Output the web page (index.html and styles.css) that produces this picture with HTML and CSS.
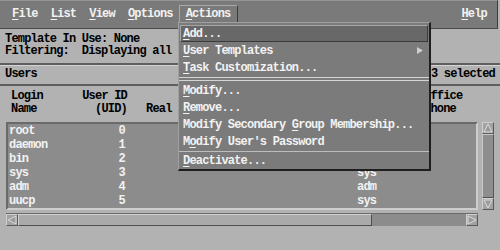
FILE: index.html
```html
<!DOCTYPE html>
<html lang="en">
<head>
    <meta charset="UTF-8">
    <title>Users</title>
    <link rel="stylesheet" href="styles.css">
</head>
<body>

<div class="window">
    <!-- ===== MENU BAR ===== -->
    <div class="menubar">
        <span class="menu-title"><u>F</u>ile</span>
        <span class="menu-title"><u>L</u>ist</span>
        <span class="menu-title"><u>V</u>iew</span>
        <span class="menu-title"><u>O</u>ptions</span>
        <span class="menu-title active"><u>A</u>ctions</span>
        <span class="menu-title help"><u>H</u>elp</span>
    </div>

    <!-- ===== INFO ===== -->
    <div class="info">
        <div class="line">Template In Use: None</div>
        <div class="line">Filtering:  Displaying all</div>
    </div>

    <div class="section-bar">
        <span>Users</span>
        <span>3 selected</span>
    </div>

    <!-- ===== COLUMN HEADERS ===== -->
    <div class="headers">
        <div class="col-login">Login<br>Name</div>
        <div class="col-uid">User ID<br>(UID)</div>
        <div class="col-real"><br>Real Name</div>
        <div class="col-group"><br>Group</div>
        <div class="col-office">Office<br>Phone</div>
    </div>

    <!-- ===== USER LIST ===== -->
    <div class="list-area">
        <div class="list-box">
            <div class="row"><span class="col-login">root</span><span class="col-uid">0</span><span class="col-real"></span><span class="col-group">other</span></div>
            <div class="row"><span class="col-login">daemon</span><span class="col-uid">1</span><span class="col-real"></span><span class="col-group">other</span></div>
            <div class="row"><span class="col-login">bin</span><span class="col-uid">2</span><span class="col-real"></span><span class="col-group">bin</span></div>
            <div class="row"><span class="col-login">sys</span><span class="col-uid">3</span><span class="col-real"></span><span class="col-group">sys</span></div>
            <div class="row"><span class="col-login">adm</span><span class="col-uid">4</span><span class="col-real"></span><span class="col-group">adm</span></div>
            <div class="row"><span class="col-login">uucp</span><span class="col-uid">5</span><span class="col-real"></span><span class="col-group">sys</span></div>
        </div>
        <div class="vscroll">
            <div class="arrow">
                <svg width="10" height="10" viewBox="0 0 10 10"><polygon points="5,1 9,9 1,9" class="tri"/></svg>
            </div>
            <div class="vthumb"></div>
            <div class="arrow">
                <svg width="10" height="10" viewBox="0 0 10 10"><polygon points="1,1 9,1 5,9" class="tri"/></svg>
            </div>
        </div>
    </div>

    <div class="hscroll">
        <div class="arrow">
            <svg width="10" height="10" viewBox="0 0 10 10"><polygon points="1,5 9,1 9,9" class="tri"/></svg>
        </div>
        <div class="hthumb"></div>
        <div class="trough"></div>
        <div class="arrow">
            <svg width="10" height="10" viewBox="0 0 10 10"><polygon points="1,1 9,5 1,9" class="tri"/></svg>
        </div>
    </div>

    <!-- ===== ACTIONS DROPDOWN ===== -->
    <div class="dropdown">
        <div class="item selected"><span><u>A</u>dd...</span></div>
        <div class="item"><span><u>U</u>ser Templates</span><svg class="cascade" width="6" height="7" viewBox="0 0 6 7"><polygon points="0,0 6,3.5 0,7"/></svg></div>
        <div class="item"><span><u>T</u>ask Customization...</span></div>
        <div class="sep-double"></div>
        <div class="item"><span><u>M</u>odify...</span></div>
        <div class="item"><span><u>R</u>emove...</span></div>
        <div class="item"><span>Modify Secondary <u>G</u>roup Membership...</span></div>
        <div class="item"><span>M<u>o</u>dify User's Password</span></div>
        <div class="sep"></div>
        <div class="item last"><span><u>D</u>eactivate...</span></div>
    </div>
</div>

</body>
</html>
```

FILE: styles.css
```css
:root {
    --bar: #7a7a7a;
    --body: #b2b2b2;
    --list: #8c8c8c;
    --menu: #7b7b7b;
    --hilite: #686868;
    --light: #d4d4d4;
    --dark: #3c3c3c;
    --text-light: #f2f2f2;
    --font: "Liberation Mono", "Courier New", monospace;
}
body {
    margin: 0;
    background-color: var(--body);
}
.window {
    position: relative;
    width: 500px;
    height: 250px;
    overflow: hidden;
    background-color: var(--body);
    font-family: var(--font);
    font-weight: bold;
    font-size: 12px;
    letter-spacing: -0.8px;
    color: #000;
    white-space: nowrap;
}
u {
    text-decoration: underline;
    text-underline-offset: 2px;
}

/* ----- menu bar ----- */
.menubar {
    display: flex;
    gap: 1px;
    height: 23px;
    margin-right: 2px;
    padding: 4px 4px 0 6px;
    background-color: var(--bar);
    border-top: 1px solid #959595;
    border-right: 1px solid var(--dark);
    border-bottom: 1px solid #4a4a4a;
    color: var(--text-light);
}
.menu-title {
    height: 18px;
    line-height: 18px;
    padding: 0 6px;
    box-sizing: border-box;
}
.menu-title.active {
    padding: 0 6px;
    margin-left: -1px;
    border-top: 1px solid #a8a8a8;
    border-left: 1px solid #a8a8a8;
    border-right: 1px solid var(--dark);
    line-height: 17px;
}
.menu-title.help {
    margin-left: auto;
}

/* ----- info ----- */
.info {
    padding: 4px 5px 6px;
    line-height: 12px;
}
.info .line {
    white-space: pre;
}
.section-bar {
    display: flex;
    justify-content: space-between;
    height: 19px;
    line-height: 19px;
    padding: 0 5px 0 5px;
    border-top: 2px solid #5e5e5e;
    border-bottom: 2px solid #5e5e5e;
    box-shadow: inset 0 1px 0 var(--light);
}

/* ----- columns ----- */
.col-login { width: 70px; }
.col-uid { width: 46px; text-align: right; }
.col-real { width: 230px; padding-left: 20px; }
.col-group { width: 69px; }
.headers {
    display: flex;
    padding: 4px 0 0 11px;
    margin-bottom: 6px;
    line-height: 13px;
}
.headers .col-uid { width: 46px; }
.headers .col-real { width: 209px; padding-left: 19px; }

/* ----- list ----- */
.list-area {
    display: flex;
    gap: 4px;
    height: 88px;
    padding: 0 6px;
}
.list-box {
    flex: 1;
    background-color: var(--list);
    border: 2px solid;
    border-color: #6a6a6a #cdcdcd #cdcdcd #6a6a6a;
    color: var(--text-light);
}
.row {
    display: flex;
    height: 14px;
    line-height: 14px;
    padding-left: 1px;
}
.row .col-real { width: 212px; }
.vscroll {
    display: flex;
    flex-direction: column;
    width: 12px;
    background-color: var(--list);
}
.arrow {
    display: flex;
    align-items: center;
    justify-content: center;
    width: 12px;
    height: 12px;
    background-color: #a2a2a2;
    border: 1px solid;
    border-color: #cfcfcf #5a5a5a #5a5a5a #cfcfcf;
    box-sizing: border-box;
}
.tri {
    fill: #9a9a9a;
    stroke: #dcdcdc;
    stroke-width: 1;
}
.vthumb {
    flex: 1;
    background-color: #8e8e8e;
    border: 1px solid;
    border-color: #c8c8c8 #555 #555 #c8c8c8;
}
.hscroll {
    display: flex;
    width: 472px;
    height: 13px;
    margin: 3px 0 0 6px;
    background-color: var(--list);
    border-top: 1px solid #6a6a6a;
    box-sizing: border-box;
}
.hscroll .arrow { height: 12px; }
.hthumb {
    width: 354px;
    background-color: #aaaaaa;
    border: 1px solid;
    border-color: #d0d0d0 #4e4e4e #4e4e4e #d0d0d0;
    box-sizing: border-box;
}
.trough {
    flex: 1;
}

/* ----- dropdown ----- */
.dropdown {
    position: absolute;
    left: 178px;
    top: 22px;
    width: 250px;
    padding-top: 2px;
    background-color: var(--menu);
    border-top: 1px solid #a0a0a0;
    border-left: 1px solid #a0a0a0;
    border-right: 2px solid #1e1e1e;
    border-bottom: 2px solid #1e1e1e;
    color: var(--text-light);
}
.item {
    display: flex;
    align-items: center;
    height: 17px;
    margin: 0 1px;
    padding-left: 3px;
    box-sizing: border-box;
}
.item.selected {
    padding-left: 2px;
    background-color: var(--hilite);
    border: 1px solid;
    border-color: #a6a6a6 #3a3a3a #3a3a3a #a6a6a6;
}
.item.last { height: 16px; }
.cascade {
    margin-left: auto;
    margin-right: 5px;
    fill: #cfcfcf;
}
.sep-double {
    height: 2px;
    margin: 1px 0;
    border-top: 1px solid var(--light);
    border-bottom: 1px solid var(--light);
}
.sep {
    height: 0;
    margin: 1px 0;
    border-top: 1px solid #bdbdbd;
}
```
